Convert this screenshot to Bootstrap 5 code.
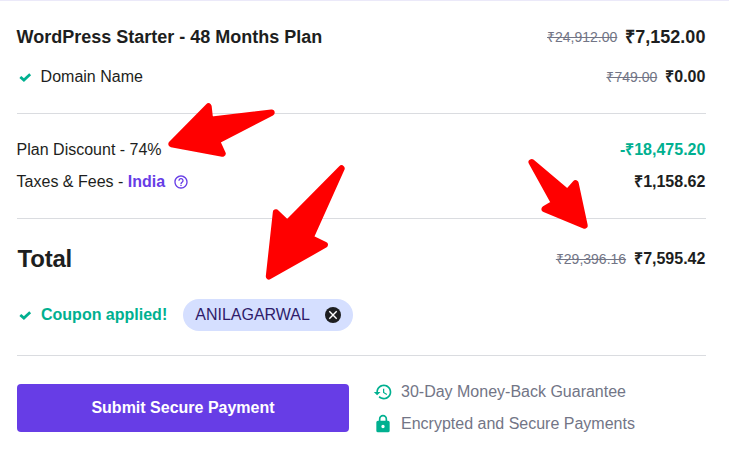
<!DOCTYPE html>
<html lang="en">
<head>
<meta charset="utf-8">
<meta name="viewport" content="width=device-width, initial-scale=1">
<title>Order summary</title>
<link href="https://cdn.jsdelivr.net/npm/bootstrap@5.3.0/dist/css/bootstrap.min.css" rel="stylesheet">
<style>
body{font-family:"Liberation Sans",Arial,sans-serif;font-size:16px;line-height:24px;color:#1d1e20;background:#fff;overflow:hidden}
.checkout{height:461px;border-top:1px solid #ebe9f9;padding:24px 23px 0 17px}
.line-item{margin-left:-.4px;margin-right:.6px}
.line-domain{margin-top:16px}
.plan-name{font-size:18px;line-height:24px}
.was{font-size:14px;color:#727586}
.rule{height:1px;background:#dadce0}
.tone-ok{color:#00b090}
.tone-brand{color:#673de6}
.total-label{font-size:24px;line-height:32px;padding-left:1px;letter-spacing:-.25px}
.tick{width:16px;height:16px;margin-right:8px}
.coupon{height:32px;width:170px;padding:0 12px;background:#d5dfff;color:#2f1c6a;margin-left:16px}
.btn-pay{width:332px;height:48px;background:#673de6;color:#fff;border:0;border-radius:4px;font-weight:700}
.btn-pay:hover{background:#5025d1;color:#fff}
.pay-row{margin-top:28px}
.perks{margin:-4px 0 0 24px;color:#727586}
.pointers{left:0;top:-1px;pointer-events:none}
.pointers path{fill:#f00;stroke:#f00;stroke-width:6.4;stroke-linejoin:round}
</style>
<script src="https://cdn.jsdelivr.net/npm/bootstrap@5.3.0/dist/js/bootstrap.bundle.min.js"></script>
</head>
<body>
<main class="checkout position-relative">
  <div class="line-item d-flex justify-content-between plan-name fw-bold">
    <span>WordPress Starter - 48 Months Plan</span>
    <span class="d-flex gap-2"><s class="was fw-normal">₹24,912.00</s><span>₹7,152.00</span></span>
  </div>
  <div class="line-item line-domain d-flex justify-content-between">
    <span class="d-flex align-items-center"><svg class="tick tone-ok" viewBox="0 0 16 16"><path d="M4.3 8.8 6.9 11.1 12.2 6.1" fill="none" stroke="currentColor" stroke-width="2.7" stroke-linecap="square"/></svg>Domain Name</span>
    <span class="d-flex gap-2"><s class="was">₹749.00</s><b>₹0.00</b></span>
  </div>
  <div class="rule mt-4 mb-4"></div>
  <div class="line-item d-flex justify-content-between"><span>Plan Discount - 74%</span><b class="tone-ok">-₹18,475.20</b></div>
  <div class="line-item d-flex justify-content-between mt-2">
    <span class="d-flex align-items-center">Taxes &amp; Fees -&nbsp;<b class="tone-brand">India</b>
      <svg class="tone-brand ms-2" width="16" height="16" viewBox="0 0 24 24" fill="currentColor"><path d="M11 18h2v-2h-2v2zm1-16C6.48 2 2 6.48 2 12s4.48 10 10 10 10-4.48 10-10S17.52 2 12 2zm0 18c-4.41 0-8-3.59-8-8s3.59-8 8-8 8 3.59 8 8-3.59 8-8 8zm0-14c-2.21 0-4 1.79-4 4h2c0-1.1.9-2 2-2s2 .9 2 2c0 2-3 1.75-3 5h2c0-2.25 3-2.5 3-5 0-2.21-1.79-4-4-4z"/></svg></span>
    <b>₹1,158.62</b>
  </div>
  <div class="rule mt-4 mb-4"></div>
  <div class="line-item d-flex justify-content-between align-items-center">
    <b class="total-label">Total</b>
    <span class="d-flex gap-2"><s class="was">₹29,396.16</s><b>₹7,595.42</b></span>
  </div>
  <div class="d-flex align-items-center mt-4">
    <svg class="tick tone-ok" viewBox="0 0 16 16"><path d="M4.3 8.8 6.9 11.1 12.2 6.1" fill="none" stroke="currentColor" stroke-width="2.7" stroke-linecap="square"/></svg>
    <b class="tone-ok">Coupon applied!</b>
    <span class="coupon rounded-pill d-flex align-items-center justify-content-between">ANILAGARWAL
      <svg width="16" height="16" viewBox="0 0 16 16"><circle cx="8" cy="8" r="8" fill="#1d1e20"/><path d="M4.3 4.3l7.4 7.4M11.7 4.3l-7.4 7.4" stroke="#fff" stroke-width="1.4"/></svg>
    </span>
  </div>
  <div class="rule mt-4"></div>
  <div class="pay-row d-flex">
    <button type="button" class="btn btn-pay">Submit Secure Payment</button>
    <div class="perks d-flex flex-column gap-2">
      <span class="d-flex align-items-center gap-2"><svg class="tone-ok" width="20" height="20" viewBox="0 0 24 24" fill="currentColor"><path d="M13 3c-4.97 0-9 4.03-9 9H1l3.89 3.89.07.14L9 12H6c0-3.87 3.13-7 7-7s7 3.13 7 7-3.13 7-7 7c-1.93 0-3.68-.79-4.94-2.06l-1.42 1.42C8.27 19.99 10.51 21 13 21c4.97 0 9-4.03 9-9s-4.03-9-9-9zm-1 5v5l4.28 2.54.72-1.21-3.5-2.08V8H12z"/></svg>30-Day Money-Back Guarantee</span>
      <span class="d-flex align-items-center gap-2"><svg class="tone-ok" width="20" height="20" viewBox="0 0 24 24" fill="currentColor"><path fill-rule="evenodd" d="M6 8H18A2 2 0 0 1 20 10V20A2 2 0 0 1 18 22H6A2 2 0 0 1 4 20V10A2 2 0 0 1 6 8ZM12 13A2 2 0 0 0 12 17A2 2 0 0 0 12 13Z"/><path d="M8 9V6A4 4 0 0 1 16 6V9" fill="none" stroke="currentColor" stroke-width="2"/></svg>Encrypted and Secure Payments</span>
    </div>
  </div>
  <!-- Highlight arrows laid over the summary -->
  <svg class="pointers position-absolute" width="729" height="461" viewBox="0 0 729 461">
    <path d="M171.500 144 208.500 106.500 210 120 271.500 112.700 216.800 141 222.500 153.500Z"/>
    <path d="M341.500 168.500 310.300 238 324.700 244.800 269 276.300 276 212.500 287.300 223.200Z"/>
    <path d="M531.700 162.300 567.500 192.400 575.500 183.500 584.500 225.500 544.700 209 554.400 203.200Z"/>
  </svg>
</main>
</body>
</html>
